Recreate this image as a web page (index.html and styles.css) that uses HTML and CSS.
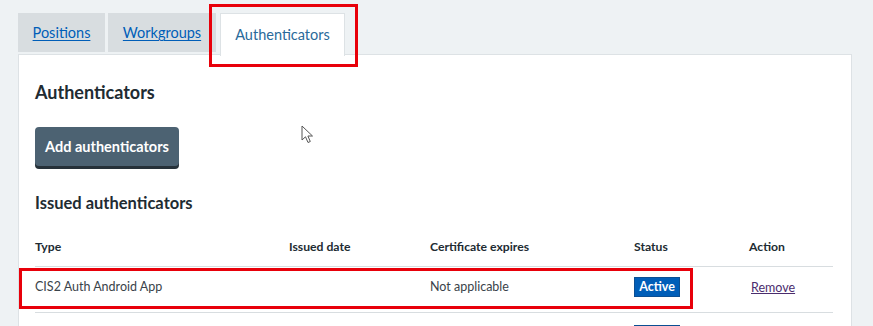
FILE: index.html
```html
<!DOCTYPE html>
<html lang="en">
<head>
<meta charset="utf-8">
<title>Authenticators</title>
<link rel="stylesheet" href="styles.css">
</head>
<body>
<div class="page">
  <ul class="tabs">
    <li class="tab"><a href="#">Positions</a></li>
    <li class="tab"><a href="#">Workgroups</a></li>
    <li class="tab tab-active"><span>Authenticators</span></li>
  </ul>
  <div class="panel">
    <h2 class="title">Authenticators</h2>
    <button class="btn" type="button">Add authenticators</button>
    <h3 class="subtitle">Issued authenticators</h3>
    <table class="table">
      <thead>
        <tr>
          <th class="c-type">Type</th>
          <th class="c-date">Issued date</th>
          <th class="c-cert">Certificate expires</th>
          <th class="c-status">Status</th>
          <th class="c-action">Action</th>
        </tr>
      </thead>
      <tbody>
        <tr>
          <td>CIS2 Auth Android App</td>
          <td></td>
          <td>Not applicable</td>
          <td><span class="tag">Active</span></td>
          <td class="act"><a href="#">Remove</a></td>
        </tr>
        <tr>
          <td>&nbsp;</td>
          <td></td>
          <td></td>
          <td><span class="tag">Active</span></td>
          <td></td>
        </tr>
      </tbody>
    </table>
  </div>
  <div class="hl hl-tab"></div>
  <div class="hl hl-row"></div>
  <svg class="cursor" width="14" height="20" viewBox="0 0 14 20" aria-hidden="true">
    <path d="M1 1 L1 15 L4.5 11.8 L7 17.5 L9.3 16.5 L6.9 11 L11.5 11 Z" fill="#fff" stroke="#555" stroke-width="1" stroke-linejoin="round"/>
  </svg>
</div>
</body>
</html>
```

FILE: styles.css
```css
* { box-sizing: border-box; }
html, body { margin: 0; padding: 0; }
body {
  background: #eef2f4;
  font-family: Lato, "Noto Sans", Arial, sans-serif;
  color: #212b32;
  width: 873px;
  height: 326px;
  overflow: hidden;
}
.page {
  position: relative;
  padding: 13px 0 0 18px;
  width: 852px;
}
.tabs {
  list-style: none;
  margin: 0;
  padding: 0;
  display: flex;
  gap: 3px;
  align-items: flex-start;
  position: relative;
  z-index: 2;
}
.tab {
  background: #d8dde0;
  height: 39px;
  display: flex;
  align-items: center;
  justify-content: center;
  font-size: 14.5px;
}
.tab:nth-child(1) { width: 87px; }
.tab:nth-child(2) { width: 108px; margin-right: 1px; }
.tab a { color: #005eb8; text-decoration: underline; text-underline-offset: 2px; }
.tab-active {
  background: #fff;
  width: 125px;
  height: 43px;
  border: 1px solid #dde2e5;
  border-bottom: none;
  padding-bottom: 2px;
}
.tab-active span { color: #2a6a9a; }
.panel {
  background: #fff;
  border: 1px solid #dde2e5;
  margin-top: -2px;
  padding: 25px 17px 40px 16px;
  min-height: 300px;
}
.title {
  margin: 0;
  font-size: 18px;
  font-weight: 700;
  line-height: 24px;
}
.btn {
  margin-top: 23px;
  background: #4c6272;
  color: #fff;
  font-family: inherit;
  font-weight: 700;
  font-size: 14.5px;
  border: none;
  border-radius: 4px;
  box-shadow: 0 3px 0 #263139;
  height: 39px;
  width: 144px;
  padding: 0;
  cursor: pointer;
}
.subtitle {
  margin: 25px 0 0;
  font-size: 16.5px;
  font-weight: 700;
  line-height: 24px;
}
.table {
  margin-top: 19px;
  width: 798px;
  border-collapse: collapse;
  font-size: 12.5px;
}
.table th {
  text-align: left;
  font-weight: 700;
  font-size: 12.2px;
  padding: 0 0 12px;
  height: 32px;
  vertical-align: bottom;
  border-bottom: 1px solid #d8dde0;
}
.c-type { width: 254px; }
.c-date { width: 141px; }
.c-cert { width: 204px; }
.c-status { width: 115px; }
.table td {
  padding: 0;
  height: 46px;
  border-bottom: 1px solid #d8dde0;
  vertical-align: middle;
  color: #3a434a;
}
.table tbody tr:first-child td { padding-bottom: 5px; }
.table td.act { padding-top: 1px; padding-bottom: 0; }
.tag {
  display: inline-block;
  background: #005eb8;
  color: #fff;
  font-weight: 700;
  font-size: 12.5px;
  line-height: 16px;
  padding: 1px 0;
  width: 46px;
  text-align: center;
  border: 1px solid #0b4f93;
}
.act a { color: #4b2d6e; text-decoration: underline; margin-left: 2px; }
.hl {
  position: absolute;
  border: 3px solid #e8000a;
  pointer-events: none;
  z-index: 5;
}
.hl-tab { left: 209px; top: 4px; width: 149px; height: 63px; }
.hl-row { left: 19px; top: 268px; width: 674px; height: 41px; }
.cursor { position: absolute; left: 301px; top: 125px; z-index: 6; }
```
